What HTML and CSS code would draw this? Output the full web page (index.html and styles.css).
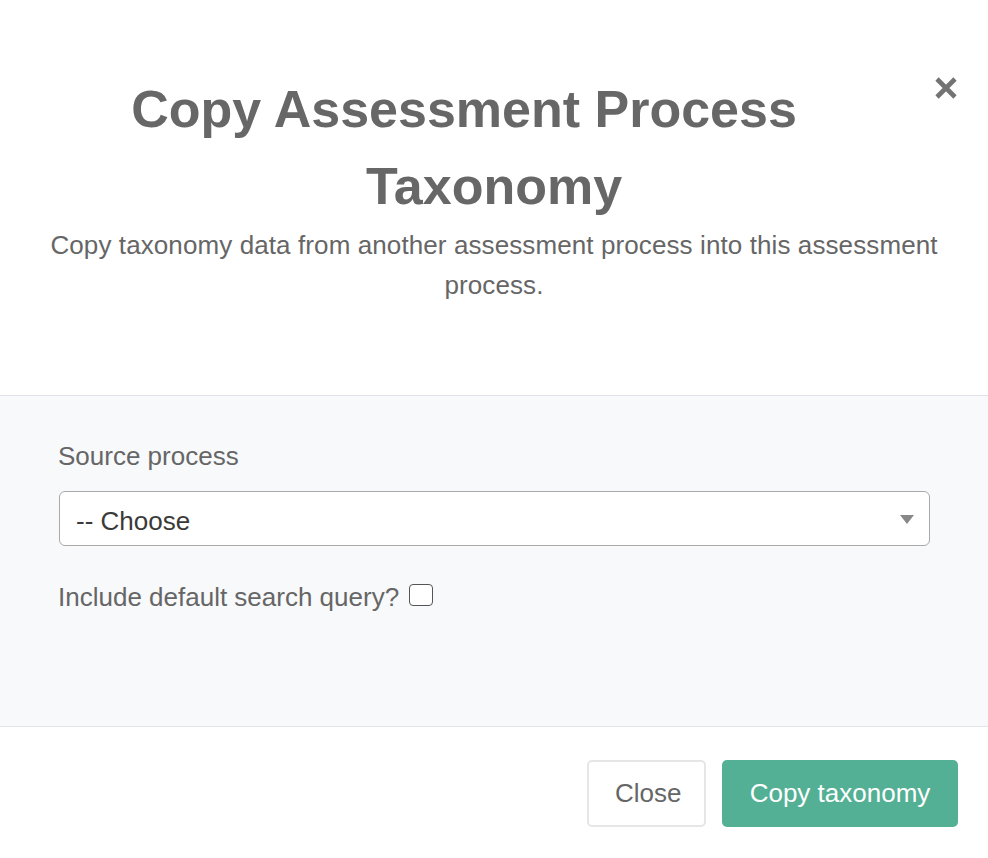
FILE: index.html
```html
<!DOCTYPE html>
<html lang="en">
<head>
  <meta charset="UTF-8" />
  <meta name="viewport" content="width=device-width, initial-scale=1.0"/>
  <title>Copy Assessment Process Taxonomy</title>
  <link rel="stylesheet" href="styles.css">
</head>
<body>

  <div class="modal">
    <div class="modal-header">
      <button class="close-x" aria-label="Close">
        <svg width="24" height="24" viewBox="0 0 24 24">
          <path d="M3 3 L21 21 M21 3 L3 21" stroke="#737373" stroke-width="4.6" stroke-linecap="butt" />
        </svg>
      </button>
      <h2 class="title"><span class="title-first">Copy Assessment Process</span><br>Taxonomy</h2>
      <p class="subtitle">Copy taxonomy data from another assessment process into this assessment process.</p>
    </div>

    <div class="modal-body">
      <label class="field-label" for="source">Source process</label>
      <div class="select-box" id="source">
        <span class="select-value">-- Choose</span>
        <span class="select-arrow"></span>
      </div>
      <label class="check-row">
        Include default search query?
        <span class="checkbox"></span>
      </label>
    </div>

    <div class="modal-footer">
      <button class="btn btn-light">Close</button>
      <button class="btn btn-primary">Copy taxonomy</button>
    </div>
  </div>

</body>
</html>
```

FILE: styles.css
```css
* {
  box-sizing: border-box;
  font-family: 'Liberation Sans', Arial, sans-serif;
}

body {
  margin: 0;
  padding: 0;
  background: #fff;
  color: #666;
}

.modal {
  width: 988px;
}

.modal-header {
  position: relative;
  padding: 71px 46px 90px;
  text-align: center;
  border-bottom: 1.5px solid #dfe2e7;
}

.close-x {
  position: absolute;
  top: 76px;
  right: 30px;
  padding: 0;
  border: none;
  background: none;
  cursor: pointer;
}

.close-x svg {
  display: block;
}

.title {
  margin: 0;
  font-size: 52px;
  line-height: 77px;
  font-weight: bold;
  color: #676767;
}

.title-first {
  margin-right: 60px;
}

.subtitle {
  margin: 0;
  font-size: 26px;
  line-height: 40px;
  letter-spacing: 0.1px;
  color: #666;
}

.modal-body {
  background: #f8f9fb;
  padding: 41px 58px 109px;
  border-bottom: 1.5px solid #e2e4e7;
}

.field-label {
  display: block;
  font-size: 26px;
  line-height: 39px;
  color: #666;
}

.select-box {
  display: flex;
  align-items: center;
  justify-content: space-between;
  height: 55px;
  margin: 15px 0 32px 1px;
  padding: 5px 15px 0 16px;
  background: #fff;
  border: 1.5px solid #a9a9a9;
  border-radius: 6px;
}

.select-value {
  font-size: 26px;
  color: #3a3a3a;
}

.select-arrow {
  width: 0;
  height: 0;
  margin-top: -4px;
  border-left: 7px solid transparent;
  border-right: 7px solid transparent;
  border-top: 9px solid #888;
}

.check-row {
  display: flex;
  align-items: center;
  gap: 10px;
  font-size: 26px;
  line-height: 39px;
  color: #666;
}

.checkbox {
  width: 24px;
  height: 22px;
  margin-top: -5px;
  border: 1.8px solid #555;
  border-radius: 4px;
  background: #fff;
}

.modal-footer {
  display: flex;
  justify-content: flex-end;
  gap: 16px;
  padding: 33px 30px 31px;
}

.btn {
  height: 67px;
  padding: 0 26px;
  font-size: 26px;
  border-radius: 5px;
  cursor: pointer;
}

.btn-light {
  width: 119px;
  background: #fff;
  color: #666;
  border: 2px solid #e6e6e6;
}

.btn-primary {
  width: 236px;
  background: #53b094;
  color: #fff;
  border: none;
}
```
